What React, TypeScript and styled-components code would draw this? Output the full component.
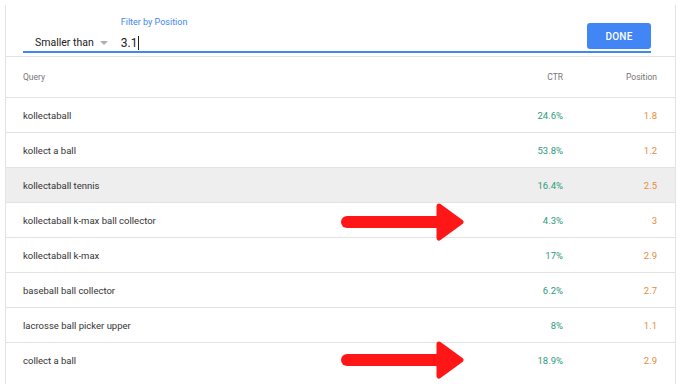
import React from "react";
import styled, { createGlobalStyle } from "styled-components";

const Global = createGlobalStyle`
  html, body { margin: 0; padding: 0; background: #fff; }
  body { font-family: Roboto, "Liberation Sans", Arial, sans-serif; }
`;

const Page = styled.div`
  padding: 5px 0 0 5px;
  width: 685px;
  height: 384px;
  box-sizing: border-box;
  overflow: hidden;
`;

const Card = styled.div`
  width: 671px;
  border-left: 1px solid #e3e3e3;
  border-right: 1px solid #e3e3e3;
  min-height: 379px;
  box-sizing: border-box;
`;

const FilterBar = styled.div`
  padding: 0 24px 3px 17px;
`;

const FilterRow = styled.div`
  display: flex;
  align-items: flex-end;
  height: 46px;
  border-bottom: 2px solid #4285f4;
`;

const SelectBox = styled.div`
  display: flex;
  align-items: center;
  padding: 0 0 1px 12px;
  font-size: 10.5px;
  line-height: 14px;
  color: #212121;
`;

const Caret = styled.span`
  margin-left: 6px;
  width: 0;
  height: 0;
  border-left: 4px solid transparent;
  border-right: 4px solid transparent;
  border-top: 4px solid #b0b0b0;
`;

const InputGroup = styled.div`
  display: flex;
  flex-direction: column;
  margin-left: 13px;
  padding-bottom: 1px;
`;

const FloatLabel = styled.div`
  font-size: 9px;
  line-height: 11px;
  color: #4285f4;
  margin-bottom: 8px;
`;

const Value = styled.div`
  display: flex;
  align-items: center;
  font-size: 12px;
  line-height: 14px;
  color: #212121;
`;

const CursorBar = styled.span`
  display: inline-block;
  width: 1px;
  height: 14px;
  background: #212121;
  margin-left: 1px;
`;

const DoneButton = styled.button`
  margin-left: auto;
  margin-bottom: 2px;
  width: 64px;
  height: 26px;
  border: none;
  border-radius: 3px;
  background: #4285f4;
  color: #fff;
  font-family: Roboto, "Liberation Sans", Arial, sans-serif;
  font-size: 10px;
  font-weight: 500;
  letter-spacing: 0.2px;
`;

const Row = styled.div<{ $header?: boolean; $highlight?: boolean }>`
  position: relative;
  display: grid;
  grid-template-columns: 1fr 100px 94px;
  align-items: center;
  height: ${(p) => (p.$header ? 40 : 34)}px;
  padding: 0 18px 0 17px;
  border-top: ${(p) => (p.$header ? "1px solid #e3e3e3" : "none")};
  border-bottom: 1px solid #e3e3e3;
  background: ${(p) => (p.$highlight ? "#eeeeee" : "transparent")};
  font-size: ${(p) => (p.$header ? 8.5 : 9.5)}px;
  color: ${(p) => (p.$header ? "#757575" : "#333333")};

  &:last-child {
    border-bottom: none;
  }
`;

const Cell = styled.div<{ $align?: "left" | "right"; $color?: string }>`
  text-align: ${(p) => p.$align || "left"};
  color: ${(p) => p.$color || "inherit"};
  white-space: nowrap;
`;

const ArrowSvg = styled.svg`
  position: absolute;
  left: 334px;
  top: 50%;
  pointer-events: none;
`;

const CTR_COLOR = "#2e9a7a";
const POS_COLOR = "#ea8a3e";

type RowData = { q: string; ctr: string; pos: string; hl?: boolean; arrow?: boolean; shift?: number };

const rows: RowData[] = [
  { q: "kollectaball", ctr: "24.6%", pos: "1.8" },
  { q: "kollect a ball", ctr: "53.8%", pos: "1.2" },
  { q: "kollectaball tennis", ctr: "16.4%", pos: "2.5", hl: true },
  { q: "kollectaball k-max ball collector", ctr: "4.3%", pos: "3", arrow: true, shift: 2 },
  { q: "kollectaball k-max", ctr: "17%", pos: "2.9" },
  { q: "baseball ball collector", ctr: "6.2%", pos: "2.7" },
  { q: "lacrosse ball picker upper", ctr: "8%", pos: "1.1" },
  { q: "collect a ball", ctr: "18.9%", pos: "2.9", arrow: true, shift: 0 },
];

const Arrow: React.FC<{ shift: number }> = ({ shift }) => (
  <ArrowSvg width="126" height="38" viewBox="0 0 126 38" style={{ marginTop: -19 + shift }}>
    <line x1="7" y1="19" x2="100" y2="19" stroke="#ff1616" strokeWidth="12" strokeLinecap="round" />
    <polygon
      points="99,3 121,19 99,35"
      fill="#ff1616"
      stroke="#ff1616"
      strokeWidth="5"
      strokeLinejoin="round"
    />
  </ArrowSvg>
);

export default function App() {
  return (
    <>
      <Global />
      <Page>
        <Card>
          <FilterBar>
            <FilterRow>
              <SelectBox>
                Smaller than
                <Caret />
              </SelectBox>
              <InputGroup>
                <FloatLabel>Filter by Position</FloatLabel>
                <Value>
                  3.1
                  <CursorBar />
                </Value>
              </InputGroup>
              <DoneButton>DONE</DoneButton>
            </FilterRow>
          </FilterBar>
          <Row $header>
            <Cell>Query</Cell>
            <Cell $align="right">CTR</Cell>
            <Cell $align="right">Position</Cell>
          </Row>
          {rows.map((r, i) => (
            <Row key={i} $highlight={r.hl}>
              <Cell>{r.q}</Cell>
              <Cell $align="right" $color={CTR_COLOR}>{r.ctr}</Cell>
              <Cell $align="right" $color={POS_COLOR}>{r.pos}</Cell>
              {r.arrow && <Arrow shift={r.shift || 0} />}
            </Row>
          ))}
        </Card>
      </Page>
    </>
  );
}
